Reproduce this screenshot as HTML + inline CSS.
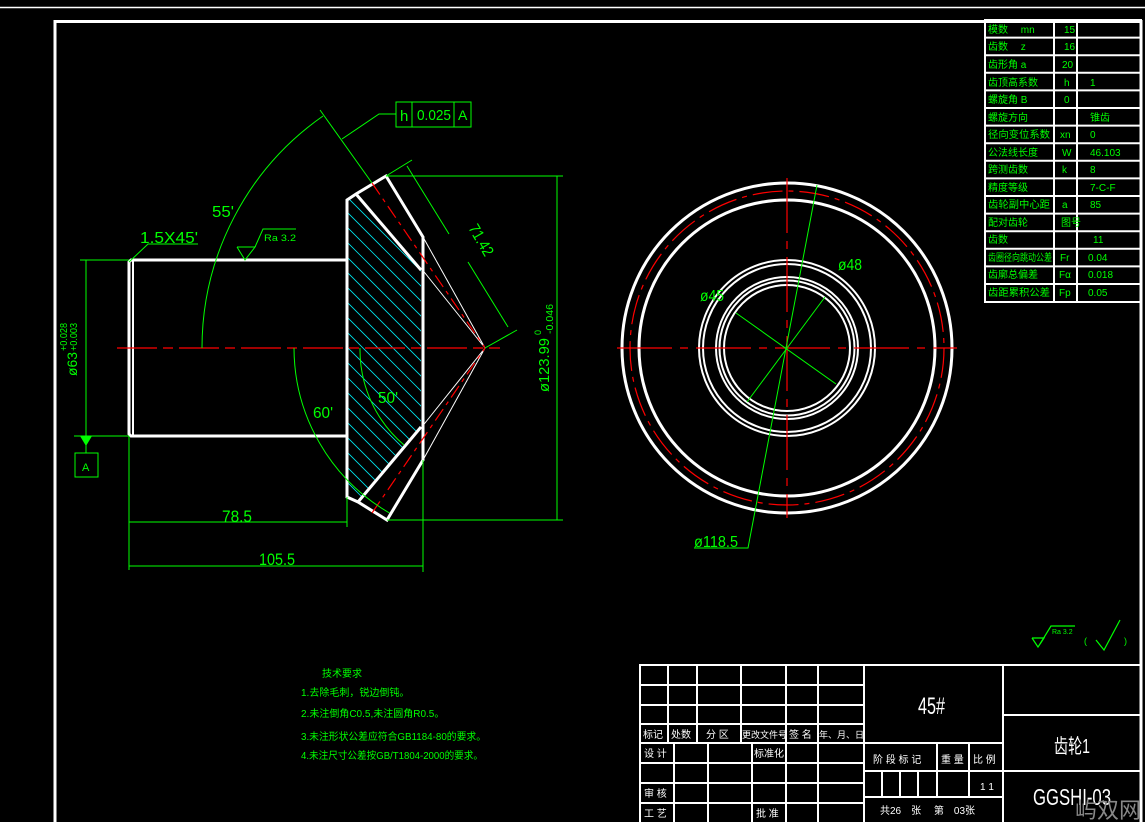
<!DOCTYPE html>
<html><head><meta charset="utf-8"><style>
html,body{margin:0;padding:0;background:#000;width:1145px;height:822px;overflow:hidden}
svg{display:block}
.g{fill:#00ff00;font-family:"Liberation Sans","Noto Sans CJK SC",sans-serif}
.w{fill:#fff;font-family:"Liberation Sans","Noto Sans CJK SC",sans-serif}
.t{font-size:9px}
</style></head><body>
<svg width="1145" height="822" viewBox="0 0 1145 822" xmlns="http://www.w3.org/2000/svg">
<defs>
<clipPath id="hc"><polygon points="347,200 356,194 421,270 421,427 358,502 347,497"/></clipPath>
</defs>
<line x1="0" y1="7.5" x2="1145" y2="7.5" stroke="#fff" stroke-width="1.5"/>
<polyline points="55,822 55,21.5 1141,21.5 1141,822" fill="none" stroke="#fff" stroke-width="3"/>

<g clip-path="url(#hc)" stroke="#00e5ee" stroke-width="0.8">
<path d="M300,150 l200,200 M300,165 l200,200 M300,180 l200,200 M300,195 l200,200 M300,210 l200,200 M300,225 l200,200 M300,240 l200,200 M300,255 l200,200 M300,270 l200,200 M300,285 l200,200 M300,300 l200,200 M300,315 l200,200 M300,330 l200,200 M300,345 l200,200 M300,360 l200,200 M300,375 l200,200 M300,390 l200,200 M300,405 l200,200 M300,420 l200,200 M300,435 l200,200 M300,450 l200,200 M300,465 l200,200 M300,135 l200,200 M300,120 l200,200 M300,105 l200,200 M300,90 l200,200 M300,75 l200,200"/>
</g>
<g stroke="#fff" stroke-width="3" fill="none">
<polyline points="347,260 131,260 129,262 129,434 131,436 347,436"/>
<line x1="133" y1="261" x2="133" y2="435" stroke-width="2"/>
<polygon points="347,200 356,194 386,176 423,237 423,460 387,520 358,502 347,497"/>
<line x1="356" y1="194" x2="421" y2="270"/>
<line x1="421" y1="427" x2="358" y2="502"/>
</g>
<g stroke="#fff" stroke-width="1" fill="none">
<line x1="423" y1="237" x2="485" y2="348"/><line x1="421" y1="268" x2="485" y2="348"/>
<line x1="423" y1="460" x2="485" y2="348"/><line x1="421" y1="428" x2="485" y2="348"/>
</g>
<g stroke="#ff0000" stroke-width="1.2" fill="none">
<line x1="117" y1="348" x2="500" y2="348" stroke-dasharray="40,6,10,6"/>
<line x1="372" y1="183" x2="485" y2="348" stroke-dasharray="14,5,4,5"/>
<line x1="372" y1="513" x2="485" y2="348" stroke-dasharray="14,5,4,5"/>
</g>
<g stroke="#00ff00" stroke-width="1" fill="none">
<path d="M202,348 A283,283 0 0 1 323,116"/>
<path d="M294,348 A191,191 0 0 0 389.5,513"/>
<path d="M360,348 A125,125 0 0 0 404,445"/>
<line x1="320" y1="110" x2="372" y2="183"/>
<rect x="396" y="102" width="75" height="25"/><line x1="412" y1="102" x2="412" y2="127"/><line x1="454" y1="102" x2="454" y2="127"/>
<polyline points="396,114 379,114 342,139"/>
<line x1="386" y1="176" x2="412" y2="160"/><line x1="485" y1="348" x2="517" y2="330"/>
<line x1="407" y1="166" x2="449" y2="234"/><line x1="468" y1="262" x2="508" y2="327"/>
<line x1="386" y1="176" x2="563" y2="176"/><line x1="387" y1="520" x2="563" y2="520"/><line x1="557" y1="176" x2="557" y2="520"/>
<line x1="80" y1="260" x2="129" y2="260"/><line x1="74" y1="436" x2="129" y2="436"/><line x1="86" y1="260" x2="86" y2="436"/>
<line x1="86" y1="436" x2="86" y2="453"/>
<rect x="75" y="453" width="23" height="24"/>
<polyline points="129,262 148,244 198,244"/>
<polyline points="237,247 255,247 245,260 237,247"/><polyline points="255,247 263,229 296,229"/>
<line x1="129" y1="436" x2="129" y2="570"/><line x1="347" y1="497" x2="347" y2="527"/><line x1="423" y1="460" x2="423" y2="572"/>
<line x1="129" y1="522" x2="347" y2="522"/><line x1="129" y1="566" x2="423" y2="566"/>
</g>
<polygon points="80,436 92,436 86,446" fill="#00ff00"/>
<g class="g">
<text x="212" y="217" font-size="16" textLength="22" lengthAdjust="spacingAndGlyphs">55'</text>
<text x="140" y="243" font-size="16" textLength="58" lengthAdjust="spacingAndGlyphs">1.5X45'</text>
<text x="264" y="241" font-size="9" textLength="32" lengthAdjust="spacingAndGlyphs">Ra 3.2</text>
<text x="313" y="418" font-size="16" textLength="20" lengthAdjust="spacingAndGlyphs">60'</text>
<text x="378" y="403" font-size="16" textLength="20" lengthAdjust="spacingAndGlyphs">50'</text>
<text x="400" y="121" font-size="15">h</text><text x="417" y="120" font-size="15" textLength="34" lengthAdjust="spacingAndGlyphs">0.025</text><text x="458" y="120" font-size="14">A</text>
<text x="82" y="471" font-size="11">A</text>
<text x="222" y="522" font-size="17" textLength="30" lengthAdjust="spacingAndGlyphs">78.5</text>
<text x="259" y="565" font-size="17" textLength="36" lengthAdjust="spacingAndGlyphs">105.5</text>
<text transform="translate(468,228) rotate(60)" font-size="16" textLength="34" lengthAdjust="spacingAndGlyphs">71.42</text>
<text transform="translate(549,392) rotate(-90)" font-size="15" textLength="54" lengthAdjust="spacingAndGlyphs">ø123.99</text>
<text transform="translate(541,335) rotate(-90)" font-size="9">0</text>
<text transform="translate(553,334) rotate(-90)" font-size="10" textLength="30" lengthAdjust="spacingAndGlyphs">-0.046</text>
<text transform="translate(77,376) rotate(-90)" font-size="14" textLength="24" lengthAdjust="spacingAndGlyphs">ø63</text>
<text transform="translate(67,351) rotate(-90)" font-size="10" textLength="28" lengthAdjust="spacingAndGlyphs">+0.028</text>
<text transform="translate(77,351) rotate(-90)" font-size="10" textLength="28" lengthAdjust="spacingAndGlyphs">+0.003</text>
</g>

<g fill="none" stroke="#fff" stroke-width="3">
<circle cx="787" cy="348" r="165"/>
<circle cx="787" cy="348" r="148"/>
<circle cx="787" cy="348" r="88" stroke-width="2"/>
<circle cx="787" cy="348" r="84" stroke-width="2"/>
<circle cx="787" cy="348" r="71" stroke-width="2"/>
<circle cx="787" cy="348" r="67.5" stroke-width="2"/>
<circle cx="787" cy="348" r="63" stroke-width="2"/>
</g>
<circle cx="787" cy="348" r="157" fill="none" stroke="#ff0000" stroke-width="1.2" stroke-dasharray="30,6,5,6"/>
<g stroke="#ff0000" stroke-width="1.2">
<line x1="617" y1="348" x2="957" y2="348" stroke-dasharray="55,8,8,8"/>
<line x1="787" y1="178" x2="787" y2="518" stroke-dasharray="55,8,8,8"/>
</g>
<g stroke="#00ff00" stroke-width="1" fill="none">
<line x1="747" y1="402" x2="825" y2="297"/>
<line x1="736" y1="313" x2="836" y2="384"/>
<polyline points="817,185 748,548 694,548"/>
</g>
<g class="g">
<text x="838" y="270" font-size="16" textLength="24" lengthAdjust="spacingAndGlyphs">ø48</text>
<text x="700" y="301" font-size="16" textLength="24" lengthAdjust="spacingAndGlyphs">ø45</text>
<text x="694" y="547" font-size="16" textLength="44" lengthAdjust="spacingAndGlyphs">ø118.5</text>
</g>

<g stroke="#fff" stroke-width="2" fill="none">
<rect x="985" y="20" width="156" height="282"/>
<line x1="1054" y1="20" x2="1054" y2="302"/><line x1="1077" y1="20" x2="1077" y2="302"/>
<path d="M985,37.6H1141M985,55.2H1141M985,72.8H1141M985,90.4H1141M985,108H1141M985,125.6H1141M985,143.2H1141M985,160.8H1141M985,178.4H1141M985,196H1141M985,213.6H1141M985,231.2H1141M985,248.8H1141M985,266.4H1141M985,284H1141"/>
</g>
<g class="g" font-size="10">
<text x="988" y="33">模数　 mn</text><text x="1064" y="33">15</text>
<text x="988" y="50">齿数　 z</text><text x="1064" y="50">16</text>
<text x="988" y="68">齿形角 a</text><text x="1062" y="68">20</text>
<text x="988" y="86">齿顶高系数</text><text x="1064" y="86">h</text><text x="1090" y="86">1</text>
<text x="988" y="103">螺旋角 B</text><text x="1064" y="103">0</text>
<text x="988" y="121">螺旋方向</text><text x="1090" y="121">锥齿</text>
<text x="988" y="138" textLength="62" lengthAdjust="spacingAndGlyphs">径向变位系数</text><text x="1060" y="138">xn</text><text x="1090" y="138">0</text>
<text x="988" y="156">公法线长度</text><text x="1062" y="156">W</text><text x="1090" y="156">46.103</text>
<text x="988" y="173">跨测齿数</text><text x="1062" y="173">k</text><text x="1090" y="173">8</text>
<text x="988" y="191">精度等级</text><text x="1090" y="191">7-C-F</text>
<text x="988" y="208" textLength="62" lengthAdjust="spacingAndGlyphs">齿轮副中心距</text><text x="1062" y="208">a</text><text x="1090" y="208">85</text>
<text x="988" y="226">配对齿轮</text><text x="1061" y="226">图号</text>
<text x="988" y="243">齿数</text><text x="1093" y="243">11</text>
<text x="988" y="261" textLength="64" lengthAdjust="spacingAndGlyphs">齿圈径向跳动公差</text><text x="1060" y="261">Fr</text><text x="1088" y="261">0.04</text>
<text x="988" y="278">齿廓总偏差</text><text x="1059" y="278">Fα</text><text x="1088" y="278">0.018</text>
<text x="988" y="296" textLength="62" lengthAdjust="spacingAndGlyphs">齿距累积公差</text><text x="1059" y="296">Fp</text><text x="1088" y="296">0.05</text>
</g>

<g stroke="#00ff00" stroke-width="1.2" fill="none">
<polyline points="1032,638 1044,638 1038,647 1032,638"/>
<polyline points="1040,644 1051,626 1075,626"/>
<polyline points="1096,640 1104,650 1120,620"/>
</g>
<g class="g"><text x="1052" y="634" font-size="7">Ra 3.2</text>
<text x="1084" y="644" font-size="9">(</text><text x="1124" y="644" font-size="9">)</text></g>

<g class="g" font-size="10">
<text x="322" y="677">技术要求</text>
<text x="301" y="696">1.去除毛刺，锐边倒钝。</text>
<text x="301" y="717">2.未注倒角C0.5,未注圆角R0.5。</text>
<text x="301" y="740" textLength="185" lengthAdjust="spacingAndGlyphs">3.未注形状公差应符合GB1184-80的要求。</text>
<text x="301" y="759" textLength="182" lengthAdjust="spacingAndGlyphs">4.未注尺寸公差按GB/T1804-2000的要求。</text>
</g>

<g stroke="#fff" stroke-width="2" fill="none">
<rect x="640" y="665" width="501" height="160"/>
<path d="M640,685H864M640,705H864M640,724H864M640,743H1003M640,763H864M640,783H864M640,803H864"/>
<path d="M668,665V743M697,665V743M741,665V743M786,665V743M818,665V743"/>
<path d="M674,743V822M708,743V822M752,743V822M786,743V822M818,743V822"/>
<path d="M864,665V822M1003,665V822"/>
<path d="M864,771H1003M864,797H1003M937,743V797M969,743V797M882,771V797M900,771V797M918,771V797"/>
<path d="M1003,715H1141M1003,771H1141"/>
</g>
<g class="w" font-size="10">
<text x="643" y="738">标记</text><text x="671" y="738">处数</text><text x="706" y="738">分 区</text><text x="742" y="738" font-size="9">更改文件号</text><text x="789" y="738">签 名</text><text x="819" y="738" font-size="9">年、月、日</text>
<text x="644" y="757">设 计</text><text x="754" y="757">标准化</text>
<text x="644" y="797">审 核</text><text x="644" y="817">工 艺</text><text x="756" y="817">批 准</text>
<text x="873" y="763">阶 段 标 记</text><text x="941" y="763">重 量</text><text x="973" y="763">比 例</text>
<text x="980" y="790">1 1</text>
<text x="880" y="814">共26　张　 第　03张</text>
</g>
<g class="w">
<text x="918" y="714" font-size="24" textLength="27" lengthAdjust="spacingAndGlyphs">45#</text>
<text x="1054" y="753" font-size="20" textLength="36" lengthAdjust="spacingAndGlyphs">齿轮1</text>
<text x="1033" y="805" font-size="23" textLength="78" lengthAdjust="spacingAndGlyphs">GGSHI-03</text>
</g>
<text x="1075" y="818" font-size="22" fill="#888" font-family="'Noto Sans CJK SC',sans-serif">屿双网</text>
</svg>
</body></html>
